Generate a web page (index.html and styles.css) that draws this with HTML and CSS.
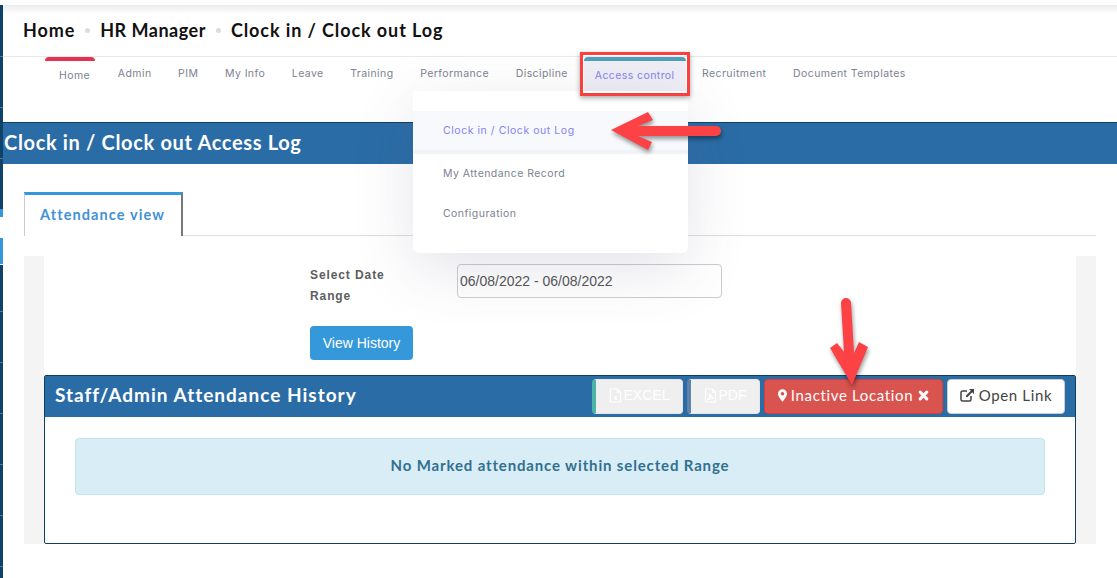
FILE: index.html
```html
<!DOCTYPE html>
<html lang="en">
<head>
<meta charset="utf-8">
<title>Clock in / Clock out Log</title>
<link rel="stylesheet" href="styles.css">
</head>
<body>
<div class="app">
  <aside class="rail"><span class="rail-tab"></span></aside>
  <main class="main">
    <header class="crumbs">
      <span>Home</span><i class="dot"></i><span class="crumb-mid">HR Manager</span><i class="dot"></i><span>Clock in / Clock out Log</span>
    </header>
    <nav class="nav">
      <a class="nav-item home">Home</a>
      <a class="nav-item">Admin</a>
      <a class="nav-item">PIM</a>
      <a class="nav-item">My Info</a>
      <a class="nav-item">Leave</a>
      <a class="nav-item">Training</a>
      <a class="nav-item">Performance</a>
      <a class="nav-item">Discipline</a>
      <a class="nav-item access">Access control</a>
      <a class="nav-item">Recruitment</a>
      <a class="nav-item">Document Templates</a>
    </nav>
    <h1 class="title">Clock in / Clock out Access Log</h1>
    <div class="tabs"><a class="tab">Attendance view</a></div>
    <section class="well">
      <div class="sheet">
        <form class="filter">
          <div class="filter-row">
            <label class="filter-label">Select Date Range</label>
            <input class="filter-input" type="text" value="06/08/2022 - 06/08/2022">
          </div>
          <button class="view-btn" type="button">View History</button>
        </form>
        <div class="card">
          <div class="card-head">
            <h2 class="card-title">Staff/Admin Attendance History</h2>
            <div class="actions">
              <button class="btn ghost excel" type="button">
                <svg class="ico" viewBox="0 0 14 16"><path d="M1.500 1h7.500l3.500 3.500V15h-11z M9 1v3.500h3.500" fill="none" stroke="currentColor" stroke-width="1.300"/><text x="7" y="12.500" class="ico-x">x</text></svg>EXCEL</button>
              <button class="btn ghost pdf" type="button">
                <svg class="ico" viewBox="0 0 14 16"><path d="M1.500 1h7.500l3.500 3.500V15h-11z M9 1v3.500h3.500 M3.500 13c2-1.500 3-4.500 3-7 .5 3 2 4.500 4 5-2.500 0-5 .8-7 2z" fill="none" stroke="currentColor" stroke-width="1.100"/></svg>PDF</button>
              <button class="btn danger" type="button">
                <svg class="ico-pin" viewBox="0 0 10 14"><path fill-rule="evenodd" d="M5 0a5 5 0 0 1 5 5c0 2.500-3 6.500-5 9-2-2.500-5-6.500-5-9a5 5 0 0 1 5-5zm0 3a2 2 0 1 0 0 4 2 2 0 0 0 0-4z" fill="currentColor"/></svg>Inactive Location
                <svg class="ico-x-mark" viewBox="0 0 10 10"><path d="M2 2l6 6M8 2l-6 6" stroke="currentColor" stroke-width="2.800" stroke-linecap="round"/></svg></button>
              <button class="btn light" type="button">
                <svg class="ico-link" viewBox="0 0 15 14"><path d="M11 8v3.500a1.500 1.500 0 0 1-1.500 1.500h-7A1.500 1.500 0 0 1 1 11.500v-7A1.500 1.500 0 0 1 2.500 3H7" fill="none" stroke="currentColor" stroke-width="1.500"/><path d="M9 1h5v5l-1.800-1.800-5.200 5.200-1.400-1.400 5.200-5.200z" fill="currentColor"/></svg>Open Link</button>
            </div>
          </div>
          <div class="card-body">
            <div class="alert">No Marked attendance within selected Range</div>
          </div>
        </div>
      </div>
    </section>
  </main>
</div>
<div class="menu">
  <a class="menu-item active">Clock in / Clock out Log</a>
  <a class="menu-item">My Attendance Record</a>
  <a class="menu-item">Configuration</a>
</div>
<span class="highlight"></span>
<svg class="arrow arrow-left" viewBox="0 0 116 46"><path d="M3 22L40 4l5 8-15 6h78a5 5 0 0 1 0 10H30l14 6-4 8z" fill="#fd4245"/></svg>
<svg class="arrow arrow-down" viewBox="0 0 48 94"><path d="M16 8a5 5 0 0 1 10 0l3 50 5-11 9 5-16 38L5 53l7-5 7 9z" fill="#fd4245"/></svg>
</body>
</html>
```
FILE: styles.css
```css
* { box-sizing: border-box; }
html, body { margin: 0; height: 100%; }
body { font-family: "Lato", "Liberation Sans", sans-serif; background: #fff; color: #222; overflow: hidden; position: relative; }
.app { display: flex; height: 578px; }
.rail { width: 3px; flex: none; margin-top: 5px; background: repeating-linear-gradient(#0f4268 0, #0f4268 50px, #55788f 50px, #55788f 51px); background-position: 0 1px; position: relative; }
.rail-tab { position: absolute; left: 0; top: 204px; width: 3px; height: 56px; background: linear-gradient(#3498db 8px, #fff 8px, #fff 29px, #3498db 29px, #3498db 55px, #fff 55px); }
.main { flex: 1; min-width: 0; }

.crumbs { height: 57px; padding: 3px 20px 0; display: flex; align-items: center; gap: 10px; border-bottom: 1px solid #e6eaef; background: linear-gradient(#fff 5px, #ececec 5px, #fff 14px); font-size: 18px; font-weight: 700; letter-spacing: .9px; color: #111; }
.crumb-mid { letter-spacing: .5px; }
.dot { width: 5px; height: 5px; border-radius: 50%; background: #dcdcdc; margin: 2px 0 0; }

.nav { height: 65px; padding-left: 42px; display: flex; align-items: flex-start; font-family: "Inter", "Noto Sans", sans-serif; font-size: 10.500px; letter-spacing: .42px; color: #7d8291; }
.nav-item { padding: 10px 13.300px 0; white-space: nowrap; }
.home { width: 50px; height: 34px; margin-right: 9.500px; padding: 8px 0 0 14px; border-top: 4px solid #e8304f; border-radius: 4px 4px 0 0; }
.access { width: 102px; height: 34px; margin: 0 3px 0 2.500px; padding: 8px 0 0 11px; border-top: 4px solid #4fa0bb; border-radius: 4px 4px 0 0; color: #8284f2; background: #efeef5; }

.title { margin: 0; height: 42px; padding: 0 0 0 1px; background: #2a6ca6; border-top: 1px solid #0f3f63; color: #fff; font-size: 20px; font-weight: 700; line-height: 38px; letter-spacing: .66px; }

.tabs { margin: 28px 21px 0; height: 44px; border-bottom: 1px solid #ddd; display: flex; }
.tab { width: 159px; height: 44px; background: #fff; border-top: 3px solid #3498db; border-left: 1px solid #ccc; border-right: 2px solid #777; padding-left: 15px; font-size: 14.500px; font-weight: 700; line-height: 40px; color: #3f92d9; letter-spacing: 1.1px; }

.well { margin: 20px 21px 0; height: 288px; background: #f4f4f4; padding: 0 20px; }
.sheet { height: 100%; background: #fff; }
.filter { padding: 8px 0 0 266px; height: 119px; }
.filter-row { display: flex; gap: 0; }
.filter-label { width: 147px; padding: 1px 60px 0 0; font-family: "Liberation Sans", sans-serif; font-size: 12px; font-weight: 700; line-height: 21px; letter-spacing: .9px; color: #5d5d5d; }
.filter-input { width: 265px; height: 34px; border: 1px solid #ccc; border-radius: 4px; padding: 0 2px; font: 14px "Liberation Sans", sans-serif; color: #555; background: #fff; }
.view-btn { display: block; margin-top: 19px; width: 103px; height: 34px; background: #3498db; border: 0; border-radius: 4px; color: #fff; font: 14px "Liberation Sans", sans-serif; }

.card { height: 169px; border: 1px solid #0f3f63; border-radius: 2px; background: #fff; }
.card-head { height: 41px; background: #2a6ca6; display: flex; align-items: center; justify-content: space-between; padding: 0 10px; }
.card-title { margin: 0 0 4px; font-size: 19px; font-weight: 700; color: #fff; letter-spacing: 1px; }
.actions { display: flex; gap: 4px; }
.btn { height: 35px; padding: 0 0 3px; border-radius: 4px; border: 1px solid #e6e6e6; font-family: "Lato", sans-serif; font-size: 15px; letter-spacing: .65px; display: flex; align-items: center; justify-content: center; }
.ghost { background: #efefef; color: #fff; font-family: "Liberation Sans", sans-serif; font-size: 14px; letter-spacing: 0; }
.excel { width: 91px; border-left: 4px solid #4cb3a6; }
.pdf { width: 73px; border-left: 4px solid #5f81aa; }
.danger { width: 179px; background: #d9534f; border-color: #d43f3a; color: #fff; }
.light { width: 118px; background: #fff; border-color: #ccc; color: #444; font-weight: 400; }
.ico { width: 13px; height: 15px; margin-right: 2px; }
.ico-x { font: 700 8px "Liberation Serif", serif; text-anchor: middle; fill: currentColor; }
.ico-pin { width: 9px; height: 13px; margin-right: 4px; }
.ico-x-mark { width: 11px; height: 11px; margin-left: 5px; }
.ico-link { width: 15px; height: 14px; margin-right: 4px; }
.card-body { padding: 21px 30px 0; }
.alert { height: 57px; padding-bottom: 3px; background: #d9edf7; border: 1px solid #bce8f1; border-radius: 4px; display: flex; align-items: center; justify-content: center; color: #31708f; font-size: 15px; font-weight: 700; letter-spacing: .85px; }

.menu { position: absolute; left: 413px; top: 91px; width: 275px; height: 162px; padding-top: 20px; background: #fff; border-radius: 0 0 6px 6px; box-shadow: 0 16px 60px rgba(90,80,120,.16); font-family: "Inter", "Noto Sans", sans-serif; font-size: 10.500px; letter-spacing: .45px; color: #7d8291; }
.menu-item { display: block; height: 40px; padding: 13px 30px 0; }
.active { height: 43px; background: #f8f9fd; border-bottom: 4px solid #f2f3f6; color: #8284f2; letter-spacing: .55px; }
.highlight { position: absolute; left: 580px; top: 52px; width: 110px; height: 44px; border: 3px solid #f9403f; box-shadow: 0 2px 5px rgba(0,0,0,.35); }
.arrow { position: absolute; overflow: visible; filter: drop-shadow(1px 3px 2px rgba(0,0,0,.4)); }
.arrow-left { left: 608px; top: 108px; width: 116px; height: 46px; }
.arrow-down { left: 825px; top: 295px; width: 48px; height: 94px; }
```
